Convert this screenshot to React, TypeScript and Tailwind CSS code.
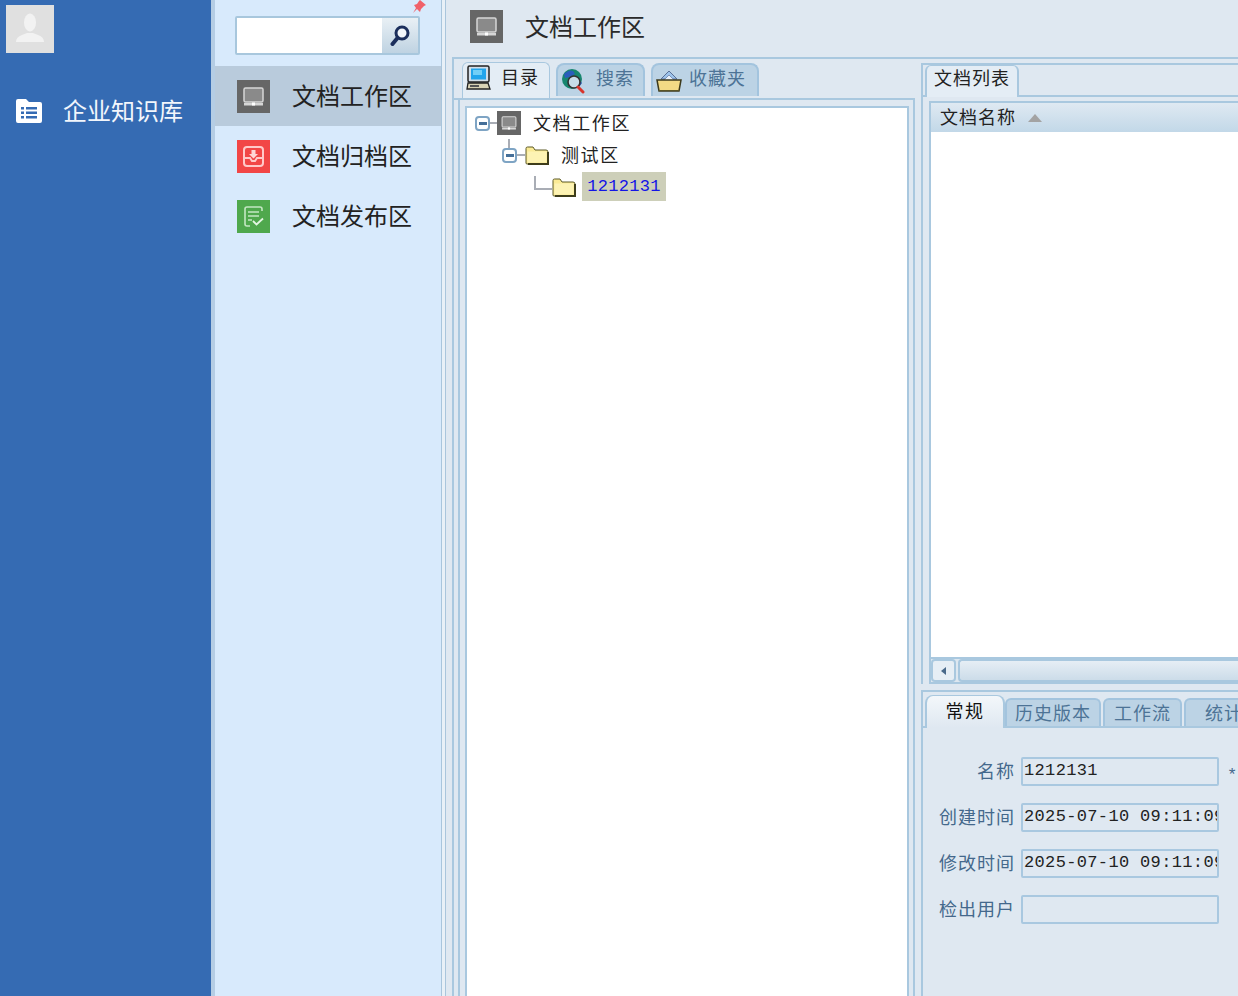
const cjk = "font-['Noto_Sans_CJK_SC','Liberation_Sans',sans-serif]";

function MonitorIcon({ size = 33 }: { size?: number }) {
  return (
    <svg width={size} height={size} viewBox="0 0 33 33" className="shrink-0">
      <rect width="33" height="33" fill="#666666" />
      <rect x="7" y="8" width="19" height="14" rx="1.500" fill="#8a8a8a" stroke="#d6d6d6" strokeWidth="1.500" />
      <rect x="7" y="23" width="19" height="2.500" fill="#d6d6d6" />
      <rect x="15" y="22.500" width="3" height="3" fill="#ffffff" />
    </svg>
  );
}

function ArchiveIcon() {
  return (
    <svg width="33" height="33" viewBox="0 0 33 33" className="shrink-0">
      <rect width="33" height="33" fill="#f24646" />
      <rect x="7" y="7" width="19" height="19" rx="3" fill="none" stroke="#ffc9c9" strokeWidth="2" />
      <path d="M7 18h6l2 3h3l2-3h6" fill="none" stroke="#ffc9c9" strokeWidth="2" />
      <path d="M14.500 10h4v4h2.500l-4.500 4.500-4.500-4.500h2.500z" fill="#ffd6d6" />
    </svg>
  );
}

function PublishIcon() {
  return (
    <svg width="33" height="33" viewBox="0 0 33 33" className="shrink-0">
      <rect width="33" height="33" fill="#4fa84d" />
      <path d="M25 11V9a2 2 0 0 0-2-2H10a2 2 0 0 0-2 2v15a2 2 0 0 0 2 2h3" fill="none" stroke="#c4e6c3" strokeWidth="1.600" />
      <path d="M11 12h11M11 16h11M11 20h4" stroke="#c4e6c3" strokeWidth="1.600" />
      <path d="M16 21l3.500 3.500 6.500-6" fill="none" stroke="#e3f5e2" strokeWidth="1.800" />
    </svg>
  );
}

function Folder() {
  return (
    <svg width="24" height="20" viewBox="0 0 24 20" className="shrink-0">
      <path d="M1 5V3.500Q1 2 2.500 2H8l2 3h11q2 0 2 2v11q0 1-1 1H2q-1 0-1-1z" fill="#fbeb96" stroke="#5c5a28" strokeWidth="1" />
      <path d="M2.500 6.500h19v11h-19z" fill="#fdf3b4" />
      <path d="M23 7v12H3" fill="none" stroke="#3e3d1b" strokeWidth="2" />
    </svg>
  );
}

function Minus({ up = false }: { up?: boolean }) {
  return (
    <span className="relative flex h-[15px] w-[15px] shrink-0 items-center justify-center rounded-[4px] border-2 border-[#7ea4c4] bg-white">
      <span className="h-[3px] w-[8px] bg-[#456f99]" />
      {up && <span className="absolute -top-[11px] left-[4px] h-[9px] w-[2px] bg-[#a9adb5]" />}
    </span>
  );
}

function ComputerIcon() {
  return (
    <svg width="25" height="25" viewBox="0 0 25 25" className="shrink-0">
      <rect x="2" y="1" width="21" height="16" rx="1.500" fill="#d3dee8" stroke="#222" strokeWidth="1.500" />
      <rect x="5" y="3.500" width="15" height="11" fill="#22a5ec" />
      <path d="M7 5h9v5H7z" fill="#72cff7" />
      <path d="M2 18h20l2 6H1z" fill="#d8d2b5" stroke="#222" strokeWidth="1.300" />
      <rect x="4" y="20" width="9" height="2" fill="#555" />
    </svg>
  );
}

function GlobeSearch() {
  return (
    <svg width="26" height="26" viewBox="0 0 26 26" className="shrink-0">
      <circle cx="11" cy="11" r="10" fill="#17866f" />
      <path d="M3 6q5-5 9-3l2 3-5 3-5 1zM14 17l5-4 2 2-3 4z" fill="#2a5dbb" />
      <circle cx="13" cy="14" r="6" fill="#c8dce8" stroke="#333" strokeWidth="1.600" />
      <path d="M17 19l5 5" stroke="#d8352c" strokeWidth="3" strokeLinecap="round" />
    </svg>
  );
}

function FavFolder() {
  return (
    <svg width="26" height="24" viewBox="0 0 26 24" className="shrink-0">
      <path d="M5 10l8-8 8 8z" fill="#9cc3ea" stroke="#5a6f96" strokeWidth="1" />
      <path d="M8 11l5-5 5 5" fill="#e8f1fb" stroke="#7e93b8" strokeWidth="1" />
      <path d="M1 11h24l-2 11H3z" fill="#f2da85" stroke="#3d3a1c" strokeWidth="1.500" />
      <path d="M3 21h20v1H3z" fill="#5b5526" />
    </svg>
  );
}

function Field({ label, value }: { label: string; value: string }) {
  return (
    <div className="flex h-[29px] items-center">
      <span className="-mt-[4px] w-[98px] shrink-0 pr-[6px] text-right text-[18px] leading-none tracking-[1px] whitespace-nowrap text-[#44688c]">{label}</span>
      <div className="flex h-[29px] w-[198px] shrink-0 items-center overflow-hidden rounded-[2px] border-2 border-[#a9c8e0] pb-[2px] pl-[1px] font-['Liberation_Mono',monospace] text-[17px] tracking-[0.35px] whitespace-pre text-[#222222]">
        {value}
      </div>
    </div>
  );
}

export default function App() {
  return (
    <div className={`flex h-[996px] w-[1238px] overflow-hidden bg-[#dfe8f1] ${cjk}`}>
      {/* left rail */}
      <aside className="h-full w-[211px] shrink-0 bg-[#356bb3] pt-[5px] pl-[6px]">
        <div className="flex h-[48px] w-[48px] items-center justify-center bg-[#e0e0e0]">
          <svg width="28" height="30" viewBox="0 0 28 30" className="-mt-[2px]">
            <ellipse cx="14" cy="9.500" rx="6" ry="9" fill="#f2f2f2" />
            <path d="M0 29q0-5 6-7l5-2h6l5 2q6 2 6 7z" fill="#f2f2f2" />
          </svg>
        </div>
        <div className="mt-[43px] flex items-center gap-[21px] pl-[10px]">
          <svg width="26" height="25" viewBox="0 0 26 25" className="shrink-0">
            <path d="M0 3q0-2 2-2h8l3 3h11q2 0 2 2v17q0 2-2 2H2q-2 0-2-2z" fill="#ffffff" />
            <path d="M5 9h3v2.500H5zM10 9h11v2.500H10zM5 13.500h3V16H5zM10 13.500h11V16H10zM5 18h3v2.500H5zM10 18h11v2.500H10z" fill="#356bb3" />
          </svg>
          <span className="text-[24px] leading-[28px] whitespace-nowrap text-[#f2f6fc]">企业知识库</span>
        </div>
      </aside>

      {/* nav column */}
      <nav className="h-full w-[230px] shrink-0 border-l-4 border-l-[#b5cde4] bg-[#d8eafc]">
        <div className="relative h-[66px] pt-[16px] pl-[20px]">
          <svg width="14" height="13" viewBox="0 0 14 13" className="absolute top-0 left-[197px]">
            <path d="M8 0l6 5-2 1-3 3-1 3-3-3-4 4 3-5-2-3 3-1 2-3z" fill="#f0616a" />
          </svg>
          <div className="flex h-[39px] w-[185px] overflow-hidden rounded-[2px] border-2 border-[#a8c7dd]">
            <div className="flex-1 bg-white" />
            <div className="flex w-[36px] items-center justify-center bg-gradient-to-b from-[#e9f0f5] to-[#bfd3e2]">
              <svg width="20" height="22" viewBox="0 0 20 22">
                <circle cx="12" cy="8" r="6" fill="#f2f6fa" stroke="#1c2f5c" strokeWidth="3" />
                <path d="M7.500 13L2.500 19" stroke="#1c2f5c" strokeWidth="4" strokeLinecap="round" />
              </svg>
            </div>
          </div>
        </div>
        {[
          { label: "文档工作区", icon: <MonitorIcon />, active: true },
          { label: "文档归档区", icon: <ArchiveIcon />, active: false },
          { label: "文档发布区", icon: <PublishIcon />, active: false },
        ].map((item) => (
          <div key={item.label} className={`flex h-[60px] items-center gap-[22px] pl-[22px] ${item.active ? "bg-[#b9cbdc]" : ""}`}>
            {item.icon}
            <span className="-mt-[2px] text-[24px] leading-[28px] whitespace-nowrap text-[#222222]">{item.label}</span>
          </div>
        ))}
      </nav>

      {/* splitter */}
      <div className="h-full w-[5px] shrink-0 border-x border-x-[#a9c5dc] bg-[#e8f0f7]" />

      {/* main */}
      <main className="flex h-full min-w-0 flex-1 flex-col">
        <header className="flex h-[57px] shrink-0 items-center gap-[22px] pb-[4px] pl-[24px]">
          <MonitorIcon />
          <span className="-mt-[2px] text-[24px] leading-[28px] whitespace-nowrap text-[#2a2a2a]">文档工作区</span>
        </header>
        <div className="ml-[6px] flex min-h-0 flex-1 border-t-2 border-l-2 border-[#a9c8df]">
          {/* left panel */}
          <section className="flex h-full w-[461px] shrink-0 flex-col">
            <div className="flex h-[41px] shrink-0 items-start gap-[6px] border-b-2 border-b-[#a9c8df] pt-[3px] pl-[8px]">
              <div className="flex h-[36px] w-[88px] shrink-0 items-center gap-[10px] rounded-t-[6px] border-x border-t border-[#a9c8df] bg-[#e4edf5] pb-[6px] pl-[3px]">
                <ComputerIcon />
                <span className="-mt-[4px] text-[18px] leading-none tracking-[1px] text-[#222]">目录</span>
              </div>
              <div className="mt-[1px] flex h-[33px] w-[89px] shrink-0 items-center gap-[9px] rounded-t-[8px] border-x-2 border-t-2 border-[#a3c4de] bg-[#bcd3e5] pl-[3px]">
                <GlobeSearch />
                <span className="-mt-[7px] text-[18px] leading-none tracking-[1px] text-[#4d7396]">搜索</span>
              </div>
              <div className="mt-[1px] flex h-[33px] w-[108px] shrink-0 items-center gap-[7px] rounded-t-[8px] border-x-2 border-t-2 border-[#a3c4de] bg-[#bcd3e5] pl-[3px]">
                <FavFolder />
                <span className="-mt-[7px] text-[18px] leading-none tracking-[1px] text-[#4d7396]">收藏夹</span>
              </div>
            </div>
            <div className="ml-[4px] flex min-h-0 flex-1 flex-col border-x-2 border-x-[#a9c8df] pt-[6px] pr-[4px] pl-[5px]">
              <div className="flex-1 border-x-2 border-t-2 border-[#a9c8df] bg-white">
                <div className="flex h-[30px] items-center pl-[8px]">
                  <Minus />
                  <span className="h-[2px] w-[7px] bg-[#a9adb5]" />
                  <MonitorIcon size={24} />
                  <span className="-mt-[2px] ml-[12px] text-[18px] leading-none tracking-[1.6px] whitespace-nowrap text-[#222]">文档工作区</span>
                </div>
                <div className="flex h-[34px] items-center pl-[35px]">
                  <Minus up />
                  <span className="h-[2px] w-[8px] bg-[#a9adb5]" />
                  <Folder />
                  <span className="-mt-[2px] ml-[12px] text-[18px] leading-none tracking-[1.6px] whitespace-nowrap text-[#222]">测试区</span>
                </div>
                <div className="flex h-[29px] items-center pl-[67px]">
                  <span className="mb-[8px] h-[14px] w-[18px] shrink-0 border-b-2 border-l-2 border-[#a9adb5]" />
                  <Folder />
                  <span className="ml-[6px] flex h-[29px] w-[84px] shrink-0 items-center justify-center bg-[#cdcfb9] font-['Liberation_Mono',monospace] text-[17px] tracking-[0.3px] text-[#1414e6]">1212131</span>
                </div>
              </div>
            </div>
          </section>

          {/* right panel */}
          <section className="ml-[6px] flex min-w-0 flex-1 flex-col overflow-hidden pt-[4px]">
            <div className="flex h-[621px] shrink-0 flex-col border-t-2 border-l-2 border-t-[#a9c8df] border-l-[#a9c8df]">
              <div className="flex h-[32px] shrink-0 border-b-2 border-b-[#a9c8df] pl-[2px]">
                <div className="flex h-[32px] w-[94px] shrink-0 items-center justify-center rounded-t-[6px] border-x-2 border-t border-[#a9c8df] bg-[#e4edf5] pb-[10px] text-[18px] leading-none tracking-[1px] whitespace-nowrap text-[#222]">文档列表</div>
              </div>
              <div className="mt-[4px] ml-[6px] flex min-h-0 flex-1 flex-col border-y-2 border-l-2 border-[#a9c8df]">
                <div className="flex h-[29px] shrink-0 items-center bg-gradient-to-b from-[#dfe9f2] to-[#c2d8e8] pl-[9px]">
                  <span className="-mt-[4px] text-[18px] leading-none tracking-[1px] whitespace-nowrap text-[#222]">文档名称</span>
                  <span className="ml-[12px] h-0 w-0 border-x-[7px] border-b-[8px] border-x-transparent border-b-[#a3a3a3]" />
                </div>
                <div className="min-h-0 flex-1 bg-white" />
                <div className="flex h-[25px] shrink-0 gap-[2px] border-t-2 border-[#a9c8df] bg-[#dde7f0]">
                  <div className="flex w-[25px] items-center justify-center rounded-[4px] border-2 border-[#a9c8df] bg-[#e6eef5]">
                    <span className="h-0 w-0 border-y-[4px] border-r-[5px] border-y-transparent border-r-[#49698a]" />
                  </div>
                  <div className="flex-1 rounded-l-[4px] border-y-2 border-l-2 border-[#a9c8df] bg-gradient-to-b from-[#e6eef5] to-[#ccdce9]" />
                </div>
              </div>
            </div>

            <div className="mt-[6px] flex min-h-0 flex-1 flex-col border-t-2 border-l-2 border-t-[#a9c8df] border-l-[#a9c8df]">
              <div className="mt-[3px] flex h-[33px] shrink-0 items-end border-b-2 border-b-[#a9c8df] pl-[2px]">
                <div className="-mb-[2px] flex h-[33px] w-[80px] shrink-0 items-center justify-center rounded-t-[8px] border-x-2 border-t border-[#a9c8df] bg-gradient-to-b from-[#f3f7fa] to-[#dfe8f1] pb-[4px] text-[18px] leading-none tracking-[1.5px] whitespace-nowrap text-[#111]">常规</div>
                <div className="flex h-[28px] w-[96px] shrink-0 items-center justify-center rounded-t-[6px] border-x-2 border-t-2 border-[#a3c4de] bg-[#bcd3e5] pb-[3px] text-[18px] leading-none tracking-[1px] whitespace-nowrap text-[#4d7396]">历史版本</div>
                <div className="ml-[2px] flex h-[28px] w-[79px] shrink-0 items-center justify-center rounded-t-[6px] border-x-2 border-t-2 border-[#a3c4de] bg-[#bcd3e5] pb-[3px] text-[18px] leading-none tracking-[1px] whitespace-nowrap text-[#4d7396]">工作流</div>
                <div className="ml-[2px] flex h-[28px] w-[90px] shrink-0 items-center rounded-t-[6px] border-x-2 border-t-2 border-[#a3c4de] bg-[#bcd3e5] pb-[3px] pl-[19px] text-[18px] leading-none tracking-[1px] whitespace-nowrap text-[#4d7396]">统计</div>
              </div>
              <div className="flex flex-col gap-[17px] pt-[29px]">
                <div className="relative w-fit">
                  <Field label="名称" value="1212131" />
                  <span className="absolute top-[6px] left-[304px] font-['Liberation_Mono',monospace] text-[17px] text-[#44688c]">*</span>
                </div>
                <Field label="创建时间" value="2025-07-10 09:11:09" />
                <Field label="修改时间" value="2025-07-10 09:11:09" />
                <Field label="检出用户" value="" />
              </div>
            </div>
          </section>
        </div>
      </main>
    </div>
  );
}
